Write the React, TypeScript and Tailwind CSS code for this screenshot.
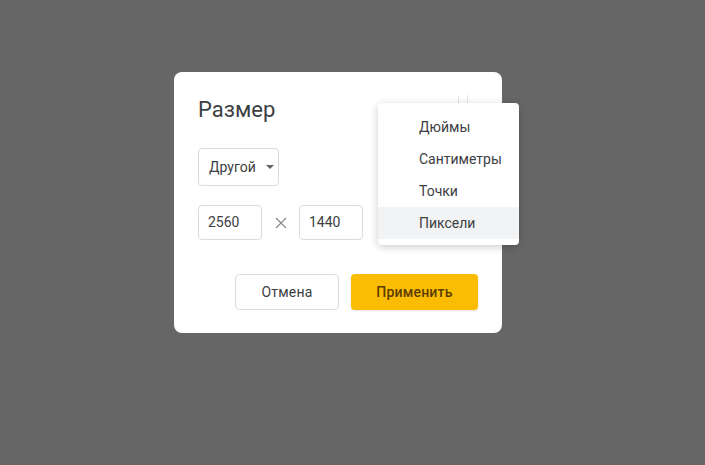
export default function App() {
  const items = ["Дюймы", "Сантиметры", "Точки", "Пиксели"];
  return (
    <div className="w-[705px] h-[465px] bg-[#666666] relative overflow-hidden" style={{ fontFamily: "Roboto, 'Noto Sans', sans-serif" }}>
      <div className="absolute left-[174px] top-[72px] w-[328px] h-[261px] bg-white rounded-[8px] pt-[24px] pl-[24px] pr-[24px]">
        <div className="text-[22px] leading-[28px] text-[#3c4043]">Размер</div>
        <div className="mt-[24px] flex">
          <div className="h-[38px] w-[81px] border border-[#dadce0] rounded-[4px] flex items-center pl-[10px] gap-[10px]">
            <span className="text-[14px] text-[#3c4043]">Другой</span>
            <svg width="8" height="4" viewBox="0 0 8 4"><path d="M0 0 L8 0 L4 4 Z" fill="#5f6368" /></svg>
          </div>
        </div>
        <div className="mt-[19px] flex items-center">
          <div className="h-[35px] w-[64px] border border-[#dadce0] rounded-[4px] flex items-center pl-[9px] text-[14px] text-[#3c4043]">2560</div>
          <div className="w-[37px] flex justify-center">
            <svg width="12" height="12" viewBox="0 0 12 12"><path d="M1 1 L11 11 M11 1 L1 11" stroke="#80868b" strokeWidth="1.1" /></svg>
          </div>
          <div className="h-[35px] w-[64px] border border-[#dadce0] rounded-[4px] flex items-center pl-[9px] text-[14px] text-[#3c4043]">1440</div>
        </div>
        <div className="mt-[34px] flex justify-end gap-[12px]">
          <div className="h-[36px] w-[104px] border border-[#dadce0] rounded-[4px] flex items-center justify-center text-[14px] tracking-[0.2px] text-[#3c4043]">Отмена</div>
          <div className="h-[36px] w-[127px] bg-[#fbbc04] rounded-[4px] flex items-center justify-center text-[14px] font-medium tracking-[0.2px] text-[#5a3d00] shadow-[0_1px_2px_rgba(0,0,0,0.12)]">Применить</div>
        </div>
      </div>
      <div className="absolute left-[458px] top-[95px] w-[10px] h-[10px] border-l border-r border-[#e4e4e4]" />
      <div className="absolute left-[378px] top-[103px] w-[141px] bg-white rounded-[4px] shadow-[0_2px_8px_rgba(0,0,0,0.2)] pt-[8px] pb-[6px]">
        {items.map((t, i) => (
          <div key={t} className={`h-[32px] flex items-center pl-[41px] text-[14px] text-[#3c4043] ${i === 3 ? "bg-[#f1f3f4]" : ""}`}>{t}</div>
        ))}
      </div>
    </div>
  );
}
